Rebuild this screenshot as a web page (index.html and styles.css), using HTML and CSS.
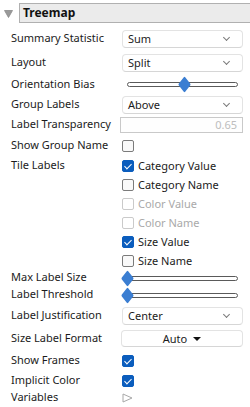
FILE: index.html
```html
<!DOCTYPE html>
<html>

<head>
    <title>Treemap</title>
    <link rel="stylesheet" href="styles.css">
</head>

<body>
    <div class="panel">
        <div class="head">
            <svg class="tri-down" width="9" height="8" viewBox="0 0 9 8"><path d="M0.5 0.5 L8.5 0.5 L4.5 7.5 Z" fill="#9a9a9a" stroke="#8a8a8a" stroke-width="0.8"/></svg>
            <div class="head-box">Treemap</div>
        </div>

        <div class="row h24">
            <span class="lbl">Summary Statistic</span>
            <div class="drop">Sum<span class="chev"></span></div>
        </div>
        <div class="row h24">
            <span class="lbl">Layout</span>
            <div class="drop">Split<span class="chev"></span></div>
        </div>
        <div class="row h19">
            <span class="lbl">Orientation Bias</span>
            <div class="slider"><div class="track"></div><div class="thumb" style="left: 51%"></div></div>
        </div>
        <div class="row h21">
            <span class="lbl">Group Labels</span>
            <div class="drop">Above<span class="chev"></span></div>
        </div>
        <div class="row h20">
            <span class="lbl">Label Transparency</span>
            <div class="num">0.65</div>
        </div>
        <div class="row h21">
            <span class="lbl">Show Group Name</span>
            <span class="cb"></span>
        </div>

        <div class="tile">
            <span class="lbl tile-lbl">Tile Labels</span>
            <div class="checks">
                <label class="chk"><span class="cb on"></span>Category Value</label>
                <label class="chk"><span class="cb"></span>Category Name</label>
                <label class="chk off"><span class="cb"></span>Color Value</label>
                <label class="chk off"><span class="cb"></span>Color Name</label>
                <label class="chk"><span class="cb on"></span>Size Value</label>
                <label class="chk"><span class="cb"></span>Size Name</label>
            </div>
        </div>

        <div class="row h16">
            <span class="lbl">Max Label Size</span>
            <div class="slider"><div class="track"></div><div class="thumb" style="left: 0"></div></div>
        </div>
        <div class="row h18">
            <span class="lbl">Label Threshold</span>
            <div class="slider"><div class="track"></div><div class="thumb" style="left: 0"></div></div>
        </div>
        <div class="row h23">
            <span class="lbl">Label Justification</span>
            <div class="drop">Center<span class="chev"></span></div>
        </div>
        <div class="row h23">
            <span class="lbl">Size Label Format</span>
            <div class="btn">Auto<span class="caret"></span></div>
        </div>
        <div class="row h21">
            <span class="lbl">Show Frames</span>
            <span class="cb on"></span>
        </div>
        <div class="row h19">
            <span class="lbl">Implicit Color</span>
            <span class="cb on"></span>
        </div>
        <div class="row h16">
            <span class="lbl">Variables</span>
            <svg class="tri-right" width="11" height="10" viewBox="0 0 11 10"><path d="M1 1 L10 5 L1 9 Z" fill="none" stroke="#a8a8a8" stroke-width="1"/></svg>
        </div>
    </div>
</body>

</html>
```

FILE: styles.css
```css
body {
    margin: 0;
    font-family: "Noto Sans", "Open Sans", sans-serif;
    font-size: 11px;
    color: #1b1b1b;
    background-color: #fff;
    width: 250px;
    height: 407px;
    overflow: hidden;
}

.head {
    display: flex;
    align-items: center;
    height: 27px;
    padding-left: 4px;
}

.tri-down {
    margin-right: 6px;
}

.head-box {
    flex: 1;
    height: 18px;
    line-height: 18px;
    margin-top: -1px;
    background-color: #ebebeb;
    border: 1px solid #b0b0b0;
    border-right: 0;
    padding-left: 3px;
    font-weight: bold;
    font-size: 12px;
    color: #111;
}

.row {
    display: flex;
    align-items: center;
}

.h16 { height: 16px; }
.h18 { height: 18px; }
.h19 { height: 19px; }
.h20 { height: 20px; }
.h21 { height: 21px; }
.h23 { height: 23px; }
.h24 { height: 24px; }

.lbl {
    width: 122px;
    padding-left: 11px;
    padding-bottom: 3px;
    box-sizing: border-box;
    flex-shrink: 0;
    white-space: nowrap;
}

.drop {
    position: relative;
    width: 121px;
    height: 18px;
    box-sizing: border-box;
    border: 1px solid #e3e3e3;
    border-bottom-color: #d6d6d6;
    border-radius: 4px;
    background-color: #fff;
    padding-left: 5px;
    line-height: 16px;
}

.chev {
    position: absolute;
    right: 13px;
    top: 4px;
    width: 4px;
    height: 4px;
    border-right: 1px solid #7a7a7a;
    border-bottom: 1px solid #7a7a7a;
    transform: rotate(45deg);
}

.slider {
    position: relative;
    width: 111px;
    height: 13px;
    margin-left: 5px;
}

.track {
    position: absolute;
    left: 0;
    right: 0;
    top: 4px;
    height: 5px;
    box-sizing: border-box;
    border: 1px solid #5a5a5a;
    border-radius: 3px;
    background-color: #fff;
}

.thumb {
    position: absolute;
    top: 2px;
    width: 9px;
    height: 9px;
    margin-left: -4px;
    background-color: #3b7ed2;
    transform: scaleY(1.3) rotate(45deg);
    border-radius: 1px;
}

.num {
    width: 123px;
    height: 16px;
    box-sizing: border-box;
    margin-left: -2px;
    border: 1px solid #c9c9c9;
    background-color: #fefefe;
    color: #bdbdbd;
    text-align: right;
    padding-right: 5px;
    line-height: 14px;
}

.cb {
    display: inline-block;
    position: relative;
    width: 12px;
    height: 12px;
    box-sizing: border-box;
    border: 1px solid #7b7b7b;
    border-radius: 2px;
    background-color: #f9f9f9;
    flex-shrink: 0;
}

.cb.on {
    background-color: #0b5dbd;
    border-color: #0b5dbd;
}

.cb.on::after {
    content: "";
    position: absolute;
    left: 3px;
    top: 1px;
    width: 3px;
    height: 6px;
    border-right: 1px solid #fff;
    border-bottom: 1px solid #fff;
    transform: rotate(45deg);
}

.tile {
    display: flex;
    align-items: flex-start;
}

.tile-lbl {
    padding-top: 1px;
}

.checks {
    display: flex;
    flex-direction: column;
}

.chk {
    display: flex;
    align-items: center;
    height: 19px;
    gap: 4px;
}

.chk.off {
    color: #a9a9a9;
}

.chk.off .cb {
    border-color: #cacaca;
    background-color: #fff;
}

.btn {
    display: flex;
    justify-content: center;
    align-items: center;
    gap: 6px;
    width: 122px;
    height: 17px;
    box-sizing: border-box;
    margin-left: -1px;
    border: 1px solid #e3e3e3;
    border-bottom-color: #d6d6d6;
    border-radius: 4px;
    background-color: #fff;
}

.caret {
    width: 0;
    height: 0;
    border-left: 4px solid transparent;
    border-right: 4px solid transparent;
    border-top: 4px solid #111;
}

.tri-right {
    display: block;
}
```
